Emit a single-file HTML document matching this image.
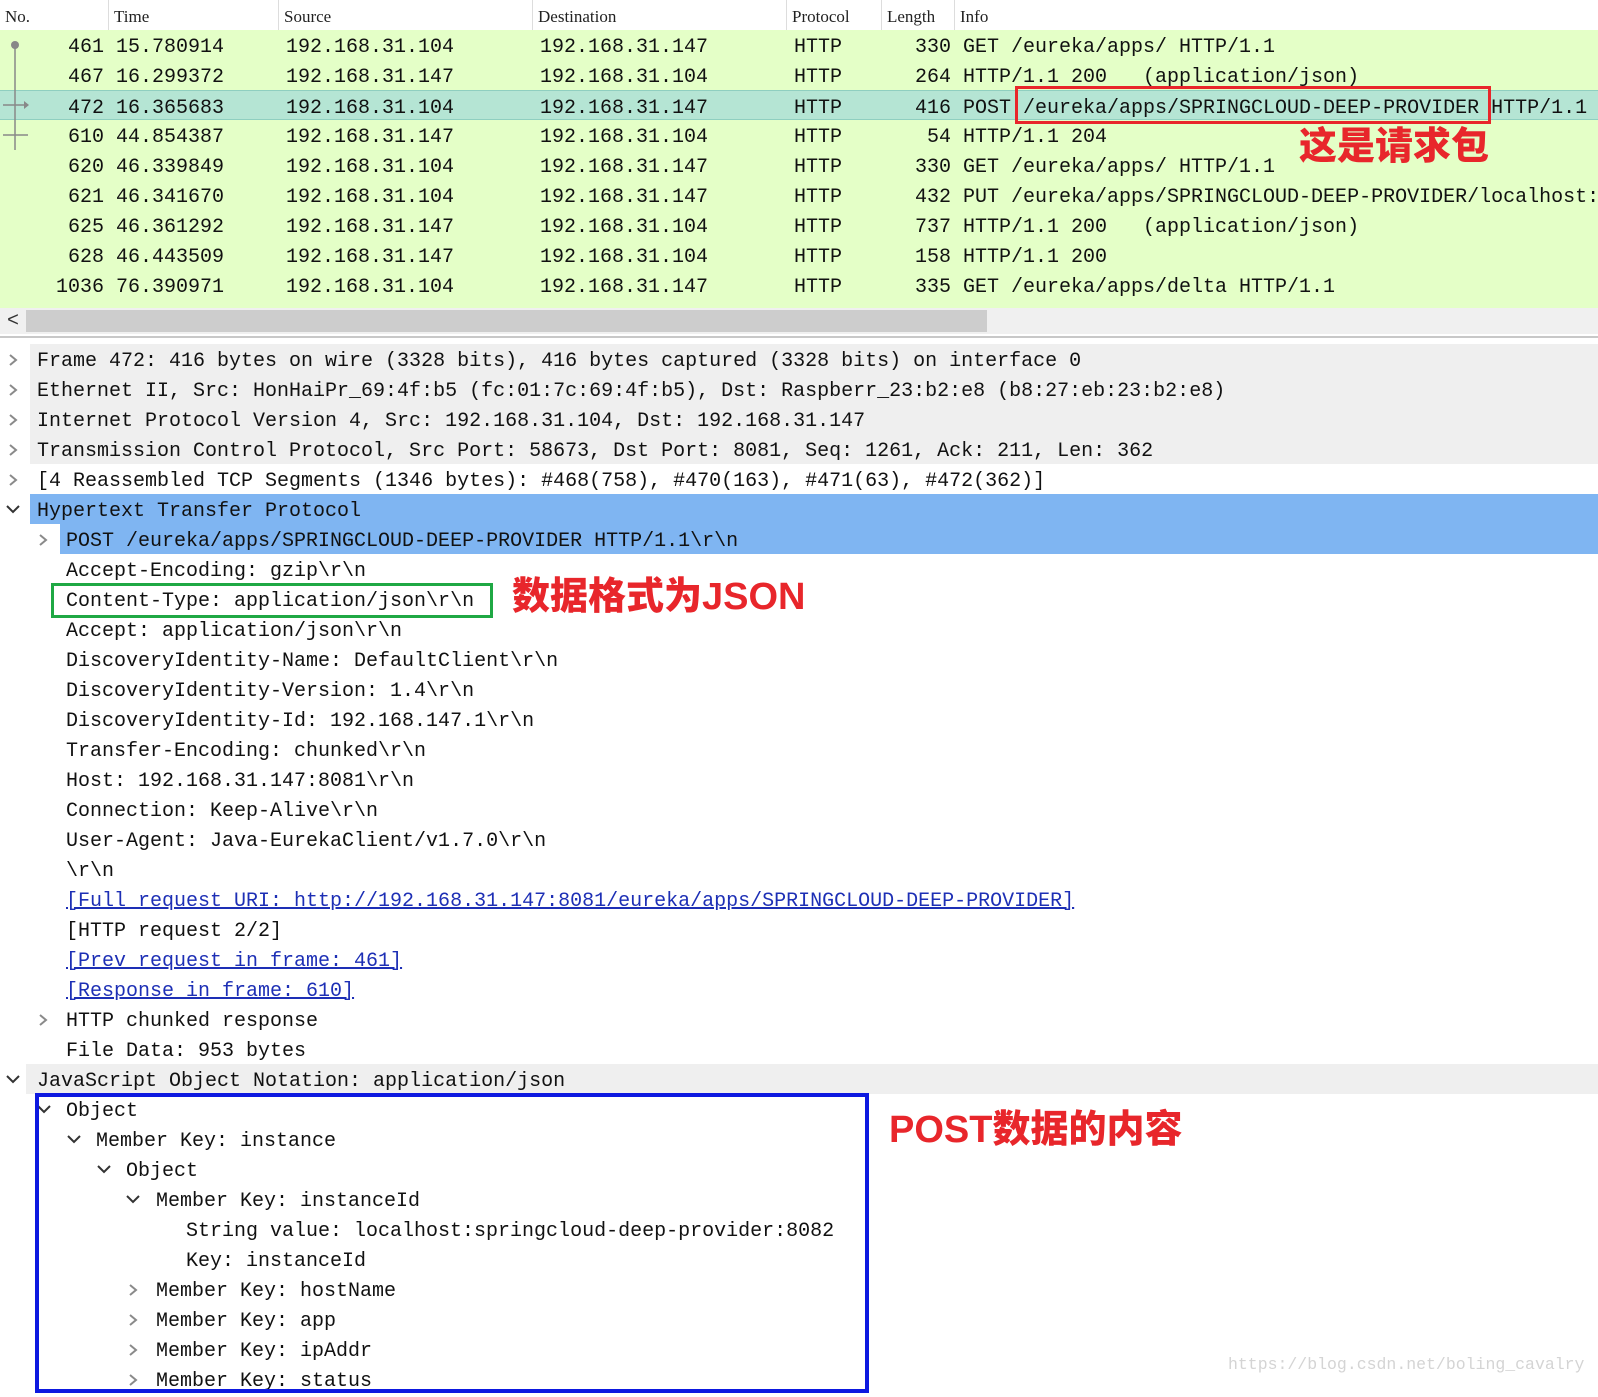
<!DOCTYPE html>
<html><head><meta charset="utf-8"><style>
*{margin:0;padding:0;box-sizing:border-box}
body{width:1598px;height:1387px;overflow:hidden;background:#fff;position:relative;font-family:"Liberation Mono",monospace;font-size:20px;color:#111}
.a{position:absolute;white-space:pre}
.hd{position:absolute;top:0;height:31px;line-height:34px;font-family:"Liberation Serif","Noto Serif CJK SC",serif;font-size:17px;color:#222;border-right:1px solid #ddd;padding-left:5px}
.row{position:absolute;left:0;width:1598px;height:30px;line-height:30px;background:#e4ffc7}
.c{position:absolute;top:3px;white-space:pre}
.r{text-align:right}
.ln{position:absolute;left:0;width:1598px;height:30px;line-height:30px;white-space:pre}
.lnk{color:#1d2fb5;text-decoration:underline}
.cn{font-family:"Liberation Sans","Noto Sans CJK SC",sans-serif;font-weight:900;color:#e8262b;position:absolute;white-space:nowrap}
</style></head><body>
<div class="a" style="left:0;top:0;width:1598px;height:31px;background:#fff;border-bottom:1px solid #ddd"></div>
<div class="hd" style="left:0;width:109px">No.</div>
<div class="hd" style="left:109px;width:170px">Time</div>
<div class="hd" style="left:279px;width:254px">Source</div>
<div class="hd" style="left:533px;width:254px">Destination</div>
<div class="hd" style="left:787px;width:95px">Protocol</div>
<div class="hd" style="left:882px;width:73px">Length</div>
<div class="hd" style="left:955px;width:643px;border:0">Info</div>

<div class="row" style="top:30px"><span class="c r" style="left:40px;width:64px">461</span><span class="c" style="left:116px">15.780914</span><span class="c" style="left:286px">192.168.31.104</span><span class="c" style="left:540px">192.168.31.147</span><span class="c" style="left:794px">HTTP</span><span class="c r" style="left:890px;width:61px">330</span><span class="c" style="left:963px">GET /eureka/apps/ HTTP/1.1</span></div>
<div class="row" style="top:60px"><span class="c r" style="left:40px;width:64px">467</span><span class="c" style="left:116px">16.299372</span><span class="c" style="left:286px">192.168.31.147</span><span class="c" style="left:540px">192.168.31.104</span><span class="c" style="left:794px">HTTP</span><span class="c r" style="left:890px;width:61px">264</span><span class="c" style="left:963px">HTTP/1.1 200   (application/json)</span></div>
<div class="row" style="top:90px;background:#b5e5d4;border-top:1px solid #8fcfc0;border-bottom:1px solid #8fcfc0"><span class="c r" style="left:40px;width:64px">472</span><span class="c" style="left:116px">16.365683</span><span class="c" style="left:286px">192.168.31.104</span><span class="c" style="left:540px">192.168.31.147</span><span class="c" style="left:794px">HTTP</span><span class="c r" style="left:890px;width:61px">416</span><span class="c" style="left:963px">POST /eureka/apps/SPRINGCLOUD-DEEP-PROVIDER HTTP/1.1</span></div>
<div class="row" style="top:120px"><span class="c r" style="left:40px;width:64px">610</span><span class="c" style="left:116px">44.854387</span><span class="c" style="left:286px">192.168.31.147</span><span class="c" style="left:540px">192.168.31.104</span><span class="c" style="left:794px">HTTP</span><span class="c r" style="left:890px;width:61px">54</span><span class="c" style="left:963px">HTTP/1.1 204</span></div>
<div class="row" style="top:150px"><span class="c r" style="left:40px;width:64px">620</span><span class="c" style="left:116px">46.339849</span><span class="c" style="left:286px">192.168.31.104</span><span class="c" style="left:540px">192.168.31.147</span><span class="c" style="left:794px">HTTP</span><span class="c r" style="left:890px;width:61px">330</span><span class="c" style="left:963px">GET /eureka/apps/ HTTP/1.1</span></div>
<div class="row" style="top:180px"><span class="c r" style="left:40px;width:64px">621</span><span class="c" style="left:116px">46.341670</span><span class="c" style="left:286px">192.168.31.104</span><span class="c" style="left:540px">192.168.31.147</span><span class="c" style="left:794px">HTTP</span><span class="c r" style="left:890px;width:61px">432</span><span class="c" style="left:963px">PUT /eureka/apps/SPRINGCLOUD-DEEP-PROVIDER/localhost:</span></div>
<div class="row" style="top:210px"><span class="c r" style="left:40px;width:64px">625</span><span class="c" style="left:116px">46.361292</span><span class="c" style="left:286px">192.168.31.147</span><span class="c" style="left:540px">192.168.31.104</span><span class="c" style="left:794px">HTTP</span><span class="c r" style="left:890px;width:61px">737</span><span class="c" style="left:963px">HTTP/1.1 200   (application/json)</span></div>
<div class="row" style="top:240px"><span class="c r" style="left:40px;width:64px">628</span><span class="c" style="left:116px">46.443509</span><span class="c" style="left:286px">192.168.31.147</span><span class="c" style="left:540px">192.168.31.104</span><span class="c" style="left:794px">HTTP</span><span class="c r" style="left:890px;width:61px">158</span><span class="c" style="left:963px">HTTP/1.1 200</span></div>
<div class="row" style="top:270px"><span class="c r" style="left:40px;width:64px">1036</span><span class="c" style="left:116px">76.390971</span><span class="c" style="left:286px">192.168.31.104</span><span class="c" style="left:540px">192.168.31.147</span><span class="c" style="left:794px">HTTP</span><span class="c r" style="left:890px;width:61px">335</span><span class="c" style="left:963px">GET /eureka/apps/delta HTTP/1.1</span></div>
<div class="row" style="top:300px;height:8px;overflow:hidden"></div>
<svg class="a" style="left:0;top:30px" width="40" height="120"><line x1="15" y1="15" x2="15" y2="120" stroke="#888" stroke-width="1.5"/><circle cx="15" cy="15" r="4" fill="#888"/><line x1="3" y1="75" x2="26" y2="75" stroke="#888" stroke-width="1.5"/><path d="M24 71 L29 75 L24 79Z" fill="#888"/><line x1="3" y1="105" x2="28" y2="105" stroke="#888" stroke-width="1.5"/></svg>
<div class="a" style="left:0;top:308px;width:1598px;height:26px;background:#f0f0f0"></div>
<div class="a" style="left:26px;top:310px;width:961px;height:22px;background:#cdcdcd"></div>
<div class="a" style="left:7px;top:308px;line-height:28px;font-size:20px;color:#333">&lt;</div>
<div class="a" style="left:0;top:336px;width:1598px;height:2px;background:#c8c8c8"></div>

<div class="a" style="left:1015px;top:86px;width:476px;height:38px;border:3px solid #e8262b"></div>
<div class="cn" style="left:1299px;top:124px;font-size:38px;line-height:46px">这是请求包</div>

<div class="a" style="left:30px;top:344px;width:1568px;height:120px;background:#efefef"></div>
<div class="a" style="left:30px;top:494px;width:1568px;height:30px;background:#7fb5f2"></div>
<div class="a" style="left:60px;top:524px;width:1538px;height:30px;background:#7fb5f2"></div>
<div class="a" style="left:26px;top:1064px;width:1572px;height:30px;background:#efefef"></div>

<div class="ln" style="top:344px"><span class="c" style="left:37px">Frame 472: 416 bytes on wire (3328 bits), 416 bytes captured (3328 bits) on interface 0</span></div>
<div class="ln" style="top:374px"><span class="c" style="left:37px">Ethernet II, Src: HonHaiPr_69:4f:b5 (fc:01:7c:69:4f:b5), Dst: Raspberr_23:b2:e8 (b8:27:eb:23:b2:e8)</span></div>
<div class="ln" style="top:404px"><span class="c" style="left:37px">Internet Protocol Version 4, Src: 192.168.31.104, Dst: 192.168.31.147</span></div>
<div class="ln" style="top:434px"><span class="c" style="left:37px">Transmission Control Protocol, Src Port: 58673, Dst Port: 8081, Seq: 1261, Ack: 211, Len: 362</span></div>
<div class="ln" style="top:464px"><span class="c" style="left:37px">[4 Reassembled TCP Segments (1346 bytes): #468(758), #470(163), #471(63), #472(362)]</span></div>
<div class="ln" style="top:494px"><span class="c" style="left:37px">Hypertext Transfer Protocol</span></div>
<div class="ln" style="top:524px"><span class="c" style="left:66px">POST /eureka/apps/SPRINGCLOUD-DEEP-PROVIDER HTTP/1.1\r\n</span></div>
<div class="ln" style="top:554px"><span class="c" style="left:66px">Accept-Encoding: gzip\r\n</span></div>
<div class="ln" style="top:584px"><span class="c" style="left:66px">Content-Type: application/json\r\n</span></div>
<div class="ln" style="top:614px"><span class="c" style="left:66px">Accept: application/json\r\n</span></div>
<div class="ln" style="top:644px"><span class="c" style="left:66px">DiscoveryIdentity-Name: DefaultClient\r\n</span></div>
<div class="ln" style="top:674px"><span class="c" style="left:66px">DiscoveryIdentity-Version: 1.4\r\n</span></div>
<div class="ln" style="top:704px"><span class="c" style="left:66px">DiscoveryIdentity-Id: 192.168.147.1\r\n</span></div>
<div class="ln" style="top:734px"><span class="c" style="left:66px">Transfer-Encoding: chunked\r\n</span></div>
<div class="ln" style="top:764px"><span class="c" style="left:66px">Host: 192.168.31.147:8081\r\n</span></div>
<div class="ln" style="top:794px"><span class="c" style="left:66px">Connection: Keep-Alive\r\n</span></div>
<div class="ln" style="top:824px"><span class="c" style="left:66px">User-Agent: Java-EurekaClient/v1.7.0\r\n</span></div>
<div class="ln" style="top:854px"><span class="c" style="left:66px">\r\n</span></div>
<div class="ln" style="top:884px"><span class="c lnk" style="left:66px">[Full request URI: http://192.168.31.147:8081/eureka/apps/SPRINGCLOUD-DEEP-PROVIDER]</span></div>
<div class="ln" style="top:914px"><span class="c" style="left:66px">[HTTP request 2/2]</span></div>
<div class="ln" style="top:944px"><span class="c lnk" style="left:66px">[Prev request in frame: 461]</span></div>
<div class="ln" style="top:974px"><span class="c lnk" style="left:66px">[Response in frame: 610]</span></div>
<div class="ln" style="top:1004px"><span class="c" style="left:66px">HTTP chunked response</span></div>
<div class="ln" style="top:1034px"><span class="c" style="left:66px">File Data: 953 bytes</span></div>
<div class="ln" style="top:1064px"><span class="c" style="left:37px">JavaScript Object Notation: application/json</span></div>
<div class="ln" style="top:1094px"><span class="c" style="left:66px">Object</span></div>
<div class="ln" style="top:1124px"><span class="c" style="left:96px">Member Key: instance</span></div>
<div class="ln" style="top:1154px"><span class="c" style="left:126px">Object</span></div>
<div class="ln" style="top:1184px"><span class="c" style="left:156px">Member Key: instanceId</span></div>
<div class="ln" style="top:1214px"><span class="c" style="left:186px">String value: localhost:springcloud-deep-provider:8082</span></div>
<div class="ln" style="top:1244px"><span class="c" style="left:186px">Key: instanceId</span></div>
<div class="ln" style="top:1274px"><span class="c" style="left:156px">Member Key: hostName</span></div>
<div class="ln" style="top:1304px"><span class="c" style="left:156px">Member Key: app</span></div>
<div class="ln" style="top:1334px"><span class="c" style="left:156px">Member Key: ipAddr</span></div>
<div class="ln" style="top:1364px"><span class="c" style="left:156px">Member Key: status</span></div>

<svg class="a" style="left:0;top:352px" width="160" height="1035" fill="none" stroke="#8a8a8a" stroke-width="2">
<path d="M10 3 L16 8 L10 13"/><path d="M10 33 L16 38 L10 43"/><path d="M10 63 L16 68 L10 73"/><path d="M10 93 L16 98 L10 103"/><path d="M10 123 L16 128 L10 133"/>
<path d="M7 154 L13 160 L19 154" stroke="#333"/>
<path d="M40 183 L46 188 L40 193"/>
<path d="M40 663 L46 668 L40 673"/>
<path d="M7 724 L13 730 L19 724" stroke="#333"/>
<path d="M38 754 L44 760 L50 754" stroke="#333"/>
<path d="M68 784 L74 790 L80 784" stroke="#333"/>
<path d="M98 814 L104 820 L110 814" stroke="#333"/>
<path d="M127 844 L133 850 L139 844" stroke="#333"/>
<path d="M130 933 L136 938 L130 943"/><path d="M130 963 L136 968 L130 973"/><path d="M130 993 L136 998 L130 1003"/><path d="M130 1023 L136 1028 L130 1033"/>
</svg>

<div class="a" style="left:51px;top:583px;width:442px;height:35px;border:3px solid #1fa844"></div>
<div class="cn" style="left:512px;top:574px;font-size:38px;line-height:46px">数据格式为JSON</div>
<div class="a" style="left:35px;top:1093px;width:834px;height:300px;border:4px solid #0d19e0"></div>
<div class="cn" style="left:889px;top:1107px;font-size:38px;line-height:46px">POST数据的内容</div>
<div class="a" style="left:1228px;top:1355px;font-family:'Liberation Mono',monospace;font-size:16.5px;color:#d4d4d4">https://blog.csdn.net/boling_cavalry</div>
</body></html>
